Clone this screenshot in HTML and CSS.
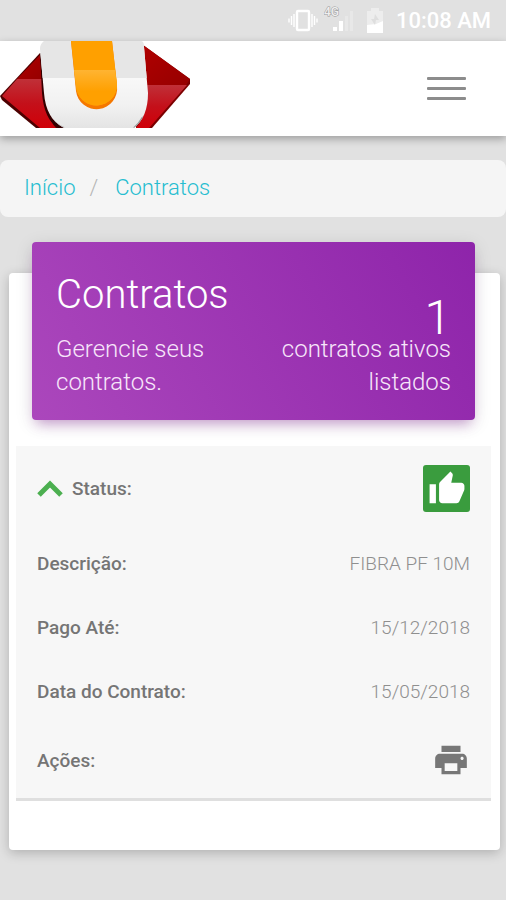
FILE: index.html
```
<!DOCTYPE html>
<html lang="pt-BR">
<head>
    <meta charset="UTF-8">
    <meta name="viewport" content="width=device-width, initial-scale=1.0">
    <title>Contratos</title>
    <link rel="stylesheet" href="styles.css">
</head>
<body>
    <div class="status-bar">
        <svg class="status-vibrate" width="30" height="24" viewBox="0 0 30 24" aria-hidden="true">
            <rect x="9" y="2" width="12" height="19" rx="1" fill="none" stroke="#fff" stroke-width="2.4"/>
            <path d="M6 5v13M3.500 7v9M1 9.500v4M24 5v13M26.500 7v9M29 9.500v4" stroke="#fff" stroke-width="1.400"/>
        </svg>
        <svg class="status-signal" width="30" height="32" viewBox="0 0 30 32" aria-hidden="true">
            <text x="0" y="11" class="signal-label">4G</text>
            <path d="M9 22h4v4H9zM15 16h4v10h-4z" fill="#fff"/>
            <path d="M21 11h3v15h-3zM26 6h3v20h-3z" fill="#e8e8e8"/>
        </svg>
        <svg class="status-battery" width="18" height="26" viewBox="0 0 18 26" aria-hidden="true">
            <path d="M5 0h8v3h4v22H1V3h4z" fill="#ededed"/>
            <path d="M1 17l9-1 7-3v12H1z" fill="#fff"/>
            <path d="M9 6l4 6h-3l-1 5-4-6h3z" fill="#dedede"/>
        </svg>
        <span class="clock">10:08 AM</span>
    </div>

    <header class="navbar">
        <a href="#" class="logo" aria-label="Início">
            <svg width="192" height="87" viewBox="0 0 192 87" aria-hidden="true">
                <defs>
                    <linearGradient id="redDark" x1="0" y1="0" x2="1" y2="1">
                        <stop offset="0" stop-color="#b00000"/>
                        <stop offset="1" stop-color="#960000"/>
                    </linearGradient>
                    <linearGradient id="redLight" x1="0" y1="0" x2="0" y2="1">
                        <stop offset="0" stop-color="#c03038"/>
                        <stop offset="0.500" stop-color="#c4101a"/>
                        <stop offset="1" stop-color="#d00008"/>
                    </linearGradient>
                    <linearGradient id="shell" x1="0" y1="0" x2="0" y2="1">
                        <stop offset="0.430" stop-color="#f8f8f8"/>
                        <stop offset="0.750" stop-color="#f1f1f1"/>
                        <stop offset="1" stop-color="#e4e4e4"/>
                    </linearGradient>
                    <linearGradient id="orange" x1="0" y1="0" x2="0" y2="1">
                        <stop offset="0" stop-color="#ffb432"/>
                        <stop offset="0.600" stop-color="#ffa000"/>
                    </linearGradient>
                    <clipPath id="shellClip">
                        <path d="M44 0h97q3 0 3 6l4 46q0 24-14 35H64Q46 78 44 52L40 8q0-5 4-8z"/>
                    </clipPath>
                </defs>
                <path d="M40 12L0 55l2 4 34 28h24z" fill="#4c0000"/>
                <path d="M40 14L17 38h25z" fill="url(#redDark)"/>
                <path d="M17 38L2 55l38 32h16Q45 76 42 38z" fill="url(#redLight)"/>
                <path d="M143 4l47 34v5l-38 44h-16z" fill="#7b0000"/>
                <path d="M143 4l47 34-4 6h-39z" fill="url(#redDark)"/>
                <path d="M147 44h40l-38 43h-13q12-15 11-43z" fill="url(#redLight)"/>
                <path d="M40 12l2 40q2 26 16 35h7Q46 78 44 52L41 12z" fill="#300"/>
                <g clip-path="url(#shellClip)">
                    <path d="M38 0h112v87H38z" fill="url(#shell)"/>
                    <path d="M38 0h112v37H38z" fill="#e6e6e6"/>
                    <path d="M50 76q5 7 14 11" fill="none" stroke="#bbb" stroke-width="2"/>
                    <path d="M143 76q-4 7-9 11" fill="none" stroke="#999" stroke-width="2"/>
                </g>
                <path d="M71 0h41l5 45a20 20 0 0 1-41 5z" fill="#f57800"/>
                <path d="M71 0h41l5 43a20 20 0 0 1-41 2z" fill="#ffa000"/>
                <path d="M74 29h41l2 14a20 20 0 0 1-41 2z" fill="url(#orange)"/>
            </svg>
        </a>
        <button type="button" class="menu-button" aria-label="Menu">
            <span class="menu-line"></span>
            <span class="menu-line"></span>
            <span class="menu-line"></span>
        </button>
    </header>

    <nav class="breadcrumb">
        <a href="#">Início</a>
        <span class="separator">/</span>
        <a href="#">Contratos</a>
    </nav>

    <main class="card">
        <div class="card-header">
            <div class="card-intro">
                <h1 class="card-title">Contratos</h1>
                <p class="card-text">Gerencie seus contratos.</p>
            </div>
            <div class="card-total">
                <span class="total-number">1</span>
                <p class="card-text">contratos ativos listados</p>
            </div>
        </div>

        <table class="contract">
            <tr class="row-status">
                <th scope="row">
                    <span class="status-label">
                        <svg width="26" height="18" viewBox="0 0 26 18" aria-hidden="true">
                            <path d="M2 15L13 4l11 11" fill="none" stroke="#4caf50" stroke-width="5"/>
                        </svg>
                        Status:
                    </span>
                </th>
                <td>
                    <span class="badge-ok">
                        <svg width="38" height="38" viewBox="0 0 24 24" aria-hidden="true">
                            <path d="M1 21h4V9H1v12zm22-11c0-1.100-.9-2-2-2h-6.310l.95-4.570.03-.32c0-.41-.17-.79-.44-1.060L14.170 1 7.590 7.590C7.220 7.950 7 8.450 7 9v10c0 1.100.9 2 2 2h9c.83 0 1.540-.5 1.840-1.220l3.020-7.050c.09-.23.14-.47.14-.73v-2z" fill="#fff"/>
                        </svg>
                    </span>
                </td>
            </tr>
            <tr>
                <th scope="row">Descrição:</th>
                <td>FIBRA PF 10M</td>
            </tr>
            <tr>
                <th scope="row">Pago Até:</th>
                <td>15/12/2018</td>
            </tr>
            <tr>
                <th scope="row">Data do Contrato:</th>
                <td>15/05/2018</td>
            </tr>
            <tr class="row-actions">
                <th scope="row">Ações:</th>
                <td>
                    <button type="button" class="print-button" aria-label="Imprimir">
                        <svg width="38" height="38" viewBox="0 0 24 24" aria-hidden="true">
                            <path d="M19 8H5c-1.660 0-3 1.340-3 3v6h4v4h12v-4h4v-6c0-1.660-1.340-3-3-3zm-3 11H8v-5h8v5zm3-7c-.55 0-1-.45-1-1s.45-1 1-1 1 .45 1 1-.45 1-1 1zm-1-9H6v4h12V3z" fill="#777"/>
                        </svg>
                    </button>
                </td>
            </tr>
        </table>
    </main>
</body>
</html>
```
FILE: styles.css
```
* {
    box-sizing: border-box;
}
body {
    margin: 0;
    background: #e1e1e1;
    font-family: Roboto, sans-serif;
    font-weight: 300;
}
a {
    color: #26bdd0;
    text-decoration: none;
}
button {
    padding: 0;
    border: 0;
    background: none;
    cursor: pointer;
}
svg {
    display: block;
}

/* barra de status */
.status-bar {
    display: flex;
    align-items: center;
    justify-content: flex-end;
    gap: 12px;
    height: 41px;
    padding-right: 15px;
}
.status-vibrate {
    margin-right: -6px;
}
.signal-label {
    fill: #eee;
    stroke: #999;
    stroke-width: 1px;
    paint-order: stroke;
    font-size: 12px;
    font-weight: 500;
}
.clock {
    color: #fff;
    font-size: 22px;
    font-weight: 500;
}

/* topo */
.navbar {
    display: flex;
    align-items: flex-start;
    justify-content: space-between;
    height: 95px;
    padding-right: 40px;
    background: #fff;
    box-shadow: 0 3px 8px rgba(0, 0, 0, 0.3);
}
.menu-button {
    display: grid;
    gap: 7px;
    align-self: center;
    width: 39px;
}
.menu-line {
    height: 3px;
    border-radius: 1px;
    background: #8c8c8c;
}

.breadcrumb {
    display: flex;
    align-items: center;
    height: 57px;
    margin-top: 24px;
    padding: 0 24px 2px;
    border-radius: 8px;
    background: #f5f5f5;
    font-size: 22px;
}
.separator {
    padding: 0 17px 0 14px;
    color: #b5b5b5;
}

/* cartão */
.card {
    margin: 56px 6px 50px 9px;
    padding: 0 9px 49px 7px;
    border-radius: 4px;
    background: #fff;
    box-shadow: 0 3px 12px rgba(0, 0, 0, 0.22);
}
.card-header {
    position: relative;
    top: -31px;
    display: flex;
    align-items: flex-end;
    justify-content: space-between;
    margin: 0 16px -5px;
    padding: 23px 24px 21px;
    border-radius: 4px;
    background: linear-gradient(60deg, #ab47bc, #8e24aa);
    box-shadow: 0 4px 18px rgba(0, 0, 0, 0.12), 0 8px 12px -5px rgba(156, 39, 176, 0.4);
    color: #fff;
}
.card-intro,
.card-total {
    width: 46%;
}
.card-total {
    text-align: right;
}
.card-title {
    margin: 0 0 8px;
    font-size: 40px;
    font-weight: 300;
    line-height: 60px;
}
.total-number {
    display: block;
    font-size: 48px;
    line-height: 30px;
}
.card-text {
    margin: 0;
    color: #f7e6fa;
    font-size: 24px;
    line-height: 33px;
}

/* contrato */
.contract {
    width: 100%;
    border-collapse: collapse;
    border-bottom: 3px solid #dfdfdf;
    background: #f7f7f7;
    font-size: 19px;
}
.contract tr {
    height: 64px;
}
.contract .row-status {
    height: 85px;
}
.contract .row-actions {
    height: 76px;
}
.contract th {
    padding: 0 0 0 21px;
    color: #757575;
    font-weight: 500;
    text-align: left;
}
.contract td {
    padding: 0 21px 0 0;
    color: #8f8f8f;
    text-align: right;
}
.status-label {
    display: flex;
    align-items: center;
    gap: 9px;
}
.badge-ok {
    display: inline-grid;
    place-items: center;
    width: 47px;
    height: 47px;
    border-radius: 3px;
    background: #3a9c3e;
    vertical-align: middle;
}
.print-button {
    vertical-align: middle;
}
```
